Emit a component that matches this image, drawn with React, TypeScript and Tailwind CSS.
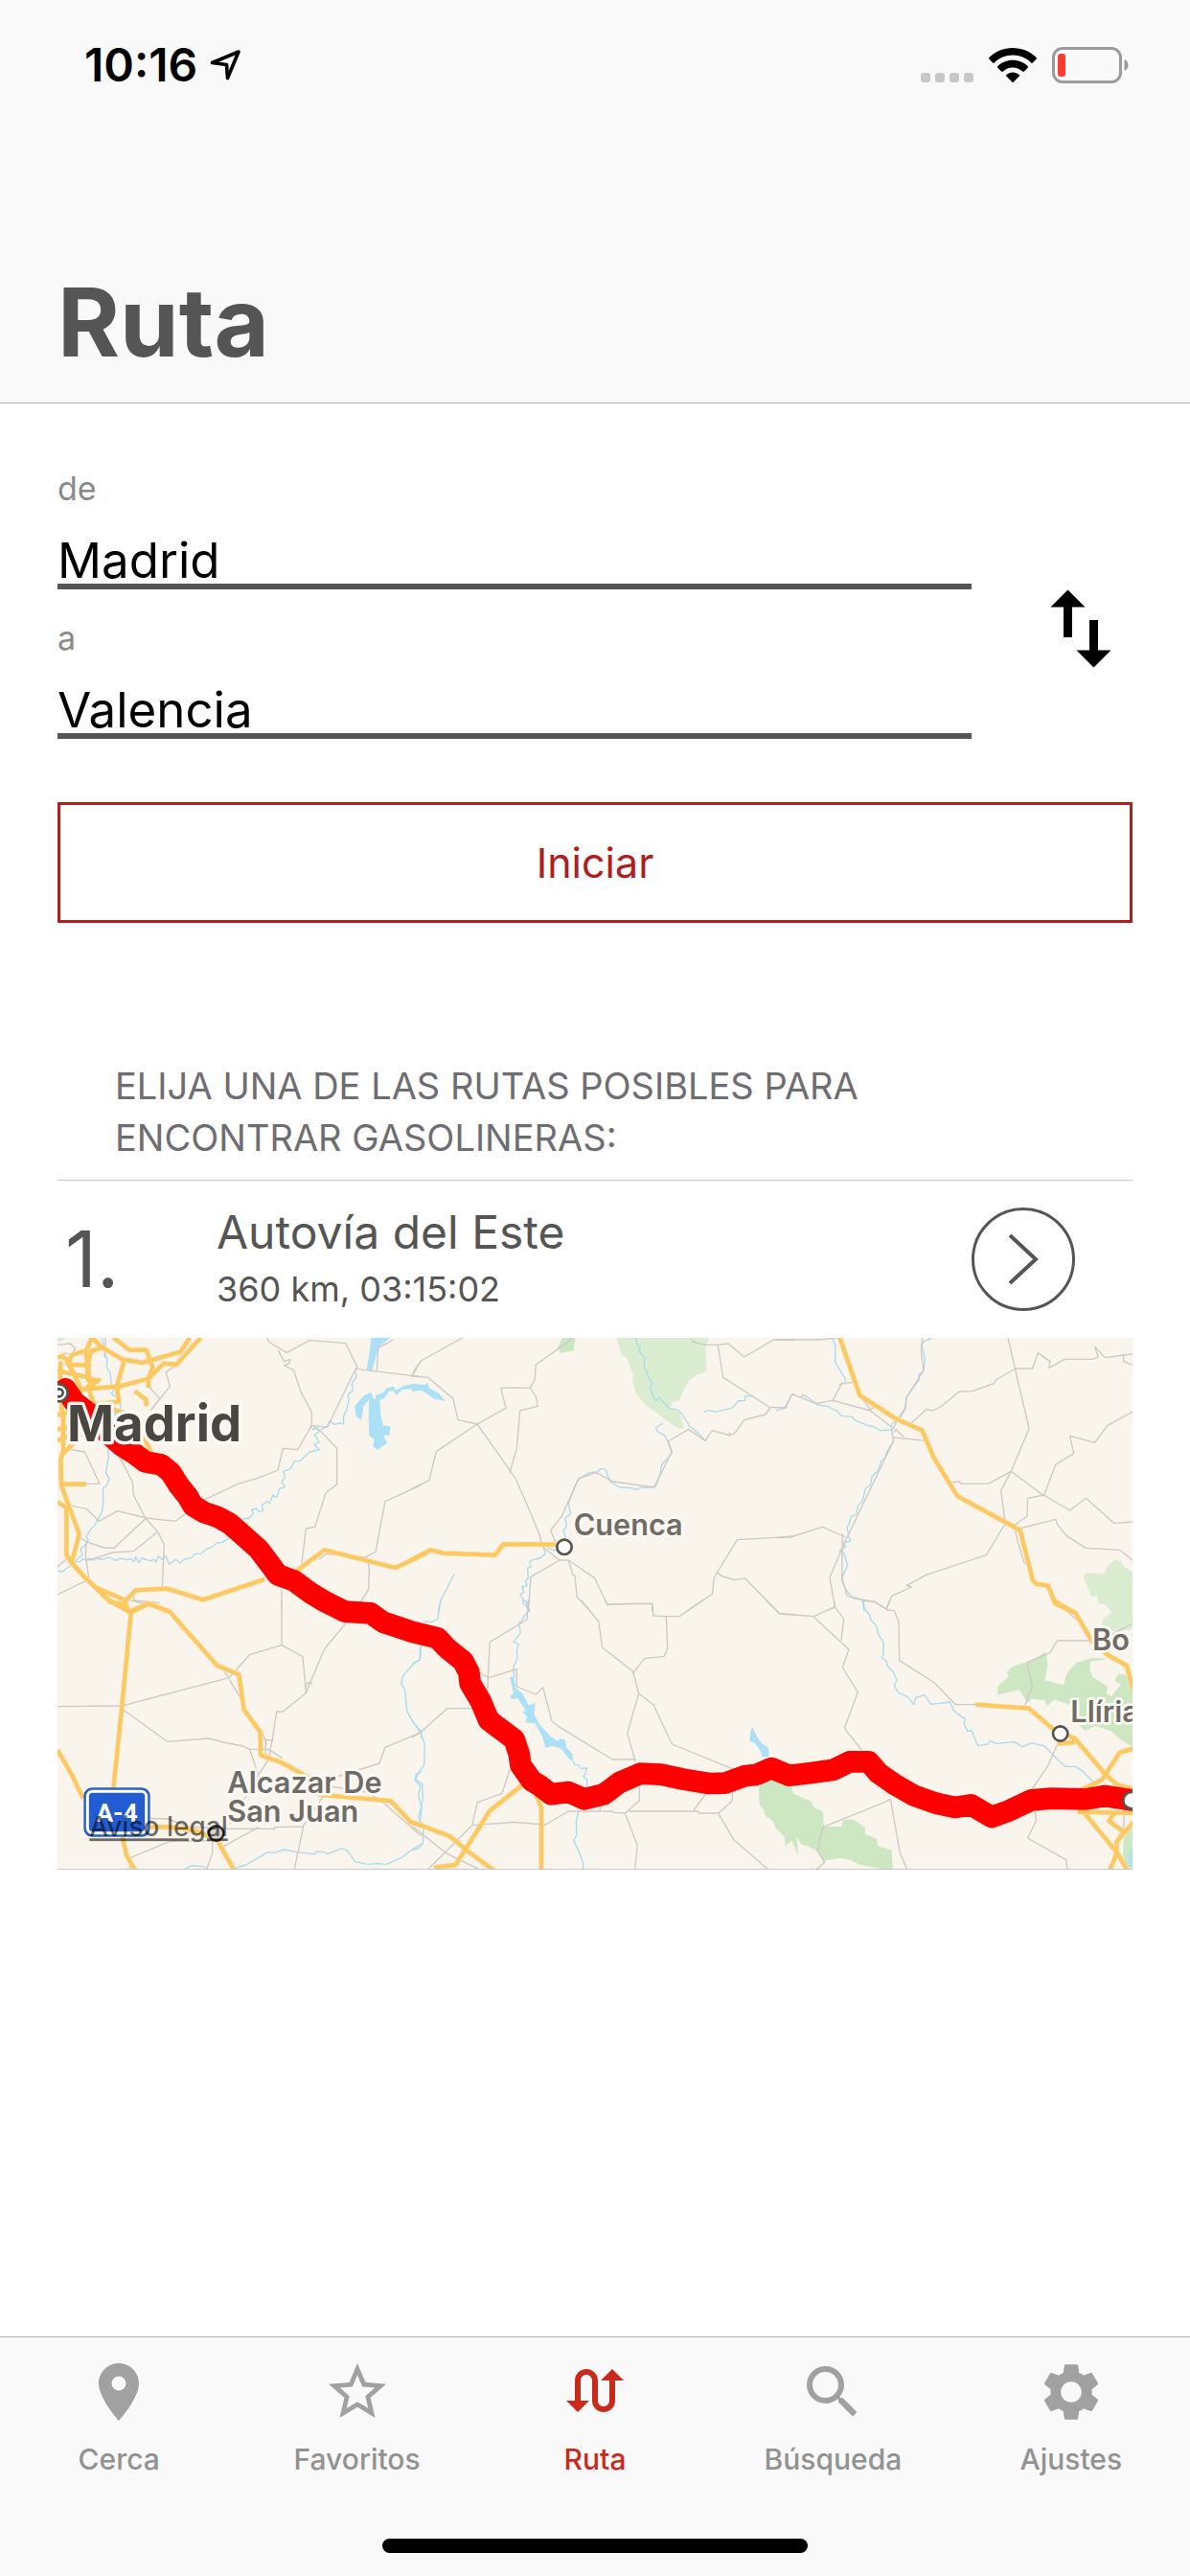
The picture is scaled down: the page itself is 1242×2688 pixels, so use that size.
import React, { useState } from "react";
import {
  MdPlace,
  MdSearch,
  MdSettings,
  MdStarOutline,
  MdSwapCalls,
  MdSwapVert,
} from "react-icons/md";

/* ---------- Map data: each tile holds point lists in its own units ---------- */

type Tile = {
  at: string;
  park?: string[];
  forest?: string[];
  lake?: string[];
  river?: string[];
  minor?: string[];
  major?: string[];
};

const tiles: Tile[] = [
  {
    at: "translate(-60 -48)",
    park: ["60,48 90,48 66,60 60,56"],
    lake: [
      "1042,48 1100,48 1085,62 1065,78 1056,110 1045,150 1028,148 1036,100",
      "1020,228 1042,218 1050,240 1068,236 1072,290 1080,322 1102,325 1100,352 1080,352 1092,378 1062,398 1048,388 1052,365 1036,355 1034,300 1036,240 1018,262 1012,305 996,295 990,262",
      "1055,228 1080,220 1090,205 1112,200 1120,212 1145,198 1175,192 1215,196 1215,210 1170,208 1140,210 1120,228 1112,214 1098,215 1082,238 1060,245",
    ],
    river: [
      "200,48 204,72 208,84 206,104 216,110 214,140 226,160 228,190 236,215 228,222 245,235 258,250 255,275 238,290 228,310",
      "218,395 220,420 216,445 212,470 222,490 214,510 202,520 204,550 200,590 188,615 176,635 162,650 150,672 158,682 144,700 132,708 138,728 120,742 116,750 132,748 138,740 150,745 160,738 172,744 186,738 200,742 220,735 245,745 255,738 275,742 290,740 300,748 305,734 315,752 325,738 350,746 362,742 368,750 376,732 388,742 398,730 410,757 430,742 445,754 455,742 480,736 490,724 510,724 525,710 545,702 560,690 575,688 600,674",
      "60,778 75,780 95,765 108,758",
      "640,616 660,612 674,598 668,586 684,582 690,592 704,588 700,572 716,560 724,566 734,540 745,548 756,520 772,515 762,500 772,484 768,466 790,458 802,434 818,434 850,405 880,398 864,382 880,375 865,352 880,340 872,330 862,336 850,322",
      "885,335 905,325 912,308 925,318 948,315 956,318 955,295 965,275 972,245 970,225 985,212 982,190 996,170 992,148",
    ],
    minor: [
      "718,48 720,60 778,94 850,56 962,65 998,138 998,146 1200,170",
      "1168,170 1180,145 1200,118",
      "1060,150 1064,80 1112,54",
      "750,86 770,122 788,115 786,128 770,134 800,150 822,218 856,280 856,322 812,398 766,394 750,462 685,488 625,505 520,555",
      "856,322 905,328 986,160 998,140",
      "862,325 884,340 935,394 935,506 900,534 866,640 838,645 824,760",
      "1200,508 1086,560 1056,718 1028,732 1036,770 1034,835 1008,878",
      "880,742 900,725 1028,735",
      "82,395 145,405 192,505 150,505",
      "252,415 295,500 298,540 335,612 374,655 394,695 388,825",
      "105,574 152,584 190,622 248,590 338,612 430,622 470,590",
      "130,674 160,690 205,705 238,706 270,675 335,615",
      "155,745 232,720 298,716 374,655",
      "150,690 148,730 158,800",
      "60,852 150,808",
      "60,765 100,730",
      "762,835 762,900",
      "60,70 100,66 116,82 104,100 84,96 60,110",
      "352,275 412,200 400,155 438,130",
      "340,195 380,238 355,272",
      "210,48 210,110",
      "270,865 295,845 300,870 380,878",
      "60,330 100,340 180,300 250,280",
    ],
    major: [
      "168,48 150,88 108,100 90,126 106,150 134,210 200,204 254,200 345,176 392,128 432,132 508,48",
      "236,48 285,86 338,86 358,140 345,176 345,204",
      "474,48 445,92 325,126 262,115 200,78 165,90 155,130 160,180 190,180 150,204",
      "168,48 200,78",
      "60,110 75,105 105,132 165,134",
      "150,88 156,180 176,200",
      "268,122 246,200 252,248 175,256 160,215",
      "302,215 338,242 338,262",
      "70,122 68,170 80,210 72,265 78,290 78,400 70,430 72,510 128,662 104,752 150,802 180,830 275,870 305,838 402,833 516,868 708,804",
      "808,778 896,712 1118,768 1215,722",
      "60,290 95,282 120,265",
      "60,335 90,328",
      "60,370 86,358 140,350",
      "60,562 88,580 88,728 104,752",
      "78,410 110,378",
      "72,506 150,506",
      "230,270 290,290 325,345 352,405",
      "60,150 100,160 150,170 188,188",
      "104,752 150,802 220,868 285,905",
      "180,830 225,875 270,882 285,905 345,880 412,905",
      "270,868 276,905",
    ],
  },
  {
    at: "translate(1110 -48)",
    park: [
      "640,48 930,48 920,75 922,152 890,165 866,182 835,245 816,248 808,268 838,282 852,332 832,332 732,258 702,222 690,180 692,165 674,112 656,102",
    ],
    forest: ["470,48 512,48 506,88 466,96 456,78"],
    lake: ["0,198 40,200 48,186 54,206 84,222 104,246 68,238 30,212 0,216"],
    river: [
      "700,48 706,70 714,76 710,90 730,112 726,135 745,180 752,188 746,205 756,236 768,244 774,234 806,270 828,272 842,282 870,325 900,350 918,370",
      "786,315 764,330 768,342 790,352 802,374 814,410 800,425 782,445 776,480 764,512 740,518 720,516 700,524 688,518 650,516 620,498 606,460 590,458 580,468 556,470 522,490 512,508 500,540 490,565 496,600 480,612 484,640 474,650 480,668 476,700",
      "914,280 930,275 950,280 1002,268 1022,246 1042,244 1044,230 1070,232",
      "410,700 418,724 400,738 380,742 368,748 372,765 362,768 364,800 356,808 360,825 344,828 350,845 338,852 350,870 348,880 362,888 368,905",
      "132,788 90,870 82,905",
      "424,704 446,714 466,710",
    ],
    minor: [
      "158,48 28,120 0,168 50,172 116,228 128,236 144,305 204,318",
      "500,52 388,132 384,180 370,204 278,205 294,268 204,318 76,404 54,494 0,520",
      "370,204 388,232 394,262 338,276 328,395 306,470",
      "204,318 306,462 326,492 358,565 400,665 406,700 462,744 490,744 572,800 612,884 676,880 752,880 752,905",
      "450,690 434,650 468,608 522,488 576,470 630,498 758,516 814,404 802,372 866,334 918,370 940,338 996,354 1012,345 1040,305 1106,288 1120,270 1118,264 974,172 958,72",
      "996,354 994,344",
      "872,48 880,60 916,70 958,70 990,66 1040,108 1132,54 1200,54",
      "1120,266 1168,266 1190,225 1200,226",
      "462,744 372,796 364,905",
      "490,744 504,790 510,792 516,858 560,905",
      "865,900 940,850 946,798 1018,680 1130,674 1200,668",
      "952,782 975,796 1012,806 1042,800 1145,905",
    ],
    major: ["0,742 58,712 98,722 260,728 286,694 450,695"],
  },
  {
    at: "translate(2250 -48)",
    park: [
      "1062,742 1080,748 1090,766 1118,782 1118,905 1050,900 1040,884 1008,880 1006,856 986,858 980,838 962,800 968,784 1026,786 1040,760",
    ],
    river: [
      "176,48 185,70 185,125 218,178 216,190 196,194",
      "488,48 464,58 456,70 466,115 462,150 446,165 448,180 426,208 408,235 406,268 390,295 362,318 360,336 325,338 305,326 286,322 262,312 245,305 238,295 204,292 192,278 160,262 130,258 100,235 84,226 78,235",
      "368,370 345,410 342,425 330,432 318,465 300,482 296,508 280,520 270,560 256,575 252,600 236,608 228,632 222,640 228,672 234,684 214,688 216,704 198,714 212,720 224,762 212,784 206,808 216,832 236,858 270,868 276,905",
      "0,276 34,266",
    ],
    minor: [
      "0,54 128,54 200,48",
      "0,266 30,266 50,224 125,254 178,244 295,276 360,326",
      "178,244 206,190 238,188",
      "262,228 300,280",
      "295,272 315,262",
      "458,48 454,90 462,150 408,235 404,268 380,305 362,340 368,370 214,690 168,798 184,890 166,900",
      "368,345 376,335 395,355 402,355",
      "368,360 470,370",
      "420,318 470,272 490,276 515,264 574,216 614,215 684,190 688,180 750,144 803,144 820,95 858,122 854,142 904,115 990,115 1008,108 998,76 1030,110 1118,98 1118,85",
      "726,48 792,332 736,466 664,505 580,505 575,498 552,500",
      "736,466 704,526 718,630 708,645 658,728 470,790 408,824 424,828 362,856 345,898",
      "736,466 838,542 876,444 932,410 920,355 998,376 1038,322 1118,278",
      "838,540 788,550 786,606 750,632 718,630",
      "838,540 920,588 970,550 1058,628 1118,624",
      "762,645 876,616 880,632 910,668 970,706 1076,712 1118,745",
      "1088,100 1088,122 1118,134",
      "748,650 758,690 776,750 800,770",
      "0,674 44,672 145,640 218,672",
      "208,660 206,800 222,855 245,864 308,874 350,900",
    ],
    major: [
      "198,44 262,228 376,302 458,338 492,420 568,544 764,650 804,808 814,818 852,824 874,880 940,910",
    ],
  },
  {
    at: "translate(-60 822)",
    river: [
      "1198,130 1196,185 1178,195 1142,236 1136,260 1148,280 1154,345 1172,380 1198,410 1200,430",
      "1200,536 1182,545 1180,565 1196,580 1190,610 1200,650 1196,690",
      "460,840 480,830 510,832 530,838",
      "610,840 650,828 718,788 740,790 770,780 810,788 866,794 872,786 896,788 905,794 950,776 966,782 992,818 1030,826 1060,824 1090,826 1136,806 1170,780 1200,762",
    ],
    minor: [
      "762,0 762,140 662,170 626,210 598,242 262,330 60,332",
      "762,140 828,176 838,290 766,348 746,348 732,440 720,500 690,545 640,630 600,700",
      "1010,0 960,75 896,152 850,260 838,290",
      "262,340 404,442 534,432 580,444 640,456 662,466 720,466 764,494",
      "662,466 688,545",
      "712,500 712,436 735,438",
      "835,275 842,258 858,260",
      "596,242 582,222",
      "598,248 636,310",
      "700,410 715,450",
      "1200,412 1086,460 1068,510 940,550",
      "900,580 1030,600 1070,625 1200,738",
      "350,682 405,684 470,708 600,715 740,715 740,710 828,708 888,620 920,580",
      "580,770 690,710",
      "830,708 802,840",
      "290,805 410,755 545,752 545,790 528,840",
      "288,808 286,840",
      "290,0 320,8 345,10",
    ],
    major: [
      "220,0 290,38 345,10 412,36 560,204 628,232 644,342 695,412 696,484 762,508 850,556 880,608 1104,628 1166,694 1210,708",
      "270,0 280,30",
      "290,38 262,330 234,600 262,735 276,798 302,842",
      "60,468 106,548 140,620",
      "330,708 420,710 490,720 560,750 612,842",
    ],
  },
  {
    at: "translate(1110 822)",
    forest: [
      "1086,590 1100,565 1130,560 1190,580 1210,800 1195,765 1190,748 1170,770 1168,740 1140,715 1130,690 1105,672 1102,655 1088,640",
    ],
    lake: [
      "306,240 318,238 326,275 345,290 365,328 386,322 382,358 402,392 438,430 458,440 464,432 480,438 484,462 502,480 504,502 494,498 468,466 440,455 418,462 408,425 385,385 355,382 360,362 346,350 356,345 330,305 312,310 308,300 318,290",
      "1066,396 1082,430 1096,448 1116,462 1118,490 1096,490 1092,472 1072,445 1058,442 1060,410",
    ],
    river: [
      "345,0 360,5 358,18 368,30 350,50 344,65 334,72 340,100 330,115 318,128 334,138 328,155 330,180 318,210 320,240",
      "504,502 510,515 522,516 530,528 548,524 544,540 536,552 548,560 548,590",
      "522,658 514,690 516,735 506,750 524,790 536,822 536,842",
      "90,0 80,58 60,68 36,66",
      "26,140 24,185 0,200",
      "0,376 26,412 40,450 38,515 24,535 10,560 32,575 34,625 20,680 36,712 34,760 22,775 0,782",
    ],
    minor: [
      "364,0 360,60 244,130 238,240 236,290",
      "200,220 240,242 328,215 328,270 388,294 410,272 438,378 458,394 628,498 700,498",
      "0,428 28,412 110,338 190,338",
      "530,0 584,66 596,148 692,222 710,292 674,416 700,505",
      "605,0 612,12 752,10 756,48 796,50 838,50 910,0",
      "796,50 800,150 790,175 728,182 690,230",
      "710,292 756,326 814,450 1010,530",
      "712,585 712,626 668,666 630,664 628,660 490,660 418,702 320,694 188,704 50,842",
      "188,704 205,632 282,604 306,530",
      "0,706 105,790 210,842",
      "668,670 706,768 698,842",
      "680,660 895,660 898,666 960,666 1002,628 1004,595",
      "880,660 920,605",
      "960,668 1008,750 1115,842",
      "585,660 595,640",
      "1108,0 1152,42 1200,44",
    ],
    major: [
      "0,694 118,738 176,786 258,846",
      "70,836 136,828 244,658 345,578",
      "388,605 405,650 405,846",
    ],
  },
  {
    at: "translate(2250 822)",
    park: ["1008,0 1118,0 1118,90 1060,98 1018,80 1026,55 1052,38 1030,10"],
    forest: [
      "0,575 40,585 56,605 110,630 120,650 146,660 150,708 205,708 210,688 240,685 280,712 278,732 314,745 318,768 362,782 365,840 330,840 262,828 232,812 200,806 150,815 130,785 96,768 80,765 65,740 58,765 44,745 30,768 26,740 0,700",
      "694,268 728,240 722,225 738,208 800,188 845,160 850,200 842,250 900,265 912,225 940,195 990,180 1040,182 985,192 982,215 992,240 1038,270 1034,290 1050,300 1080,262 1060,252 1072,230 1110,235 1118,290 1118,460 1085,440 1050,410 1000,392 968,408 950,390 930,330 870,310 850,330 840,312 800,308 788,320 760,280 694,296",
      "1118,700 1088,745 1086,800 1100,842 1118,842",
    ],
    lake: ["1118,765 1104,800 1106,830 1118,835"],
    river: [
      "274,0 276,22 292,45 296,60 314,80 320,105 336,130 336,170 330,178 345,190 350,208 366,222 378,250 370,268 382,288 412,302 432,325 438,304 465,296 485,325 515,322 545,318 556,345 580,364 592,370 588,385 600,410 612,408 632,455 662,450 670,440 690,448 745,443 772,458 800,446 840,456 866,482 905,520 938,520 960,535 992,568",
    ],
    minor: [
      "0,34 14,42 118,50 184,20 182,0",
      "118,52 228,154 208,210 256,288 214,400 268,468",
      "184,20 212,58 204,125",
      "270,0 308,4 350,30 370,32 384,68 386,188 496,258 562,326 625,326",
      "345,28 356,0",
      "1118,72 1040,112 985,126 880,126 858,164 786,194 802,270 780,328",
      "880,452 850,520 800,592",
      "812,660 814,690 788,744 908,812 912,842",
      "358,622 340,632 146,710 130,785 152,820 126,842",
      "358,622 388,790 410,842",
      "1090,670 1088,710 1065,750",
      "900,25 975,90",
    ],
    major: [
      "868,0 938,40 990,130 1040,172 1098,204 1118,280",
      "625,326 792,338 870,405 935,432 1032,545 1070,578 1118,590",
      "880,448 930,445 935,432",
      "1118,464 1076,476 1020,562 950,595",
      "944,662 1118,665",
      "944,640 1068,790 1098,842",
      "1118,694 1066,756 1066,794 1046,842",
      "1060,665 1042,690 1088,725",
    ],
  },
];

const routePoints =
  "25,160 52,200 105,242 155,297 200,337 240,362 275,388 325,397 355,422 380,462 408,497 424,525 460,547 500,560 540,582 580,617 630,662 668,712 690,742 740,760 790,797 840,827 900,857 980,862 1020,890 1070,907 1110,920 1190,940 1220,972 1270,1012 1288,1047 1292,1082 1325,1137 1350,1197 1390,1227 1430,1257 1445,1302 1450,1337 1485,1387 1510,1402 1545,1429 1600,1422 1650,1444 1710,1429 1760,1392 1825,1364 1890,1367 1960,1382 2040,1395 2090,1394 2150,1372 2190,1367 2235,1347 2290,1370 2360,1362 2430,1352 2480,1327 2540,1327 2570,1362 2620,1397 2680,1432 2750,1457 2810,1470 2860,1462 2925,1500 2980,1480 3050,1447 3110,1442 3220,1444 3280,1434 3380,1450";

type LayerName = "park" | "forest" | "lake" | "river" | "minor" | "major";

function AreaLayer({ name, fill }: { name: LayerName; fill: string }) {
  return (
    <g fill={fill}>
      {tiles.map((t) => (
        <g key={t.at} transform={t.at}>
          {(t[name] ?? []).map((p) => (
            <polygon key={p} points={p} />
          ))}
        </g>
      ))}
    </g>
  );
}

function LineLayer({ name, stroke, width }: { name: LayerName; stroke: string; width: number }) {
  return (
    <g fill="none" stroke={stroke} strokeWidth={width} strokeLinejoin="round">
      {tiles.map((t) => (
        <g key={t.at} transform={t.at}>
          {(t[name] ?? []).map((p) => (
            <polyline key={p} points={p} />
          ))}
        </g>
      ))}
    </g>
  );
}

function RouteMap() {
  return (
    <svg
      viewBox="0 0 3366 1662"
      className="block h-auto w-full bg-[#f9f4ec]"
      role="img"
      aria-label="Mapa de la ruta Madrid – Valencia"
      fontFamily="Inter, sans-serif"
    >
      <AreaLayer name="park" fill="#daedd0" />
      <AreaLayer name="forest" fill="#cde7c3" />
      <AreaLayer name="lake" fill="#abe0f7" />
      <LineLayer name="river" stroke="#a9dbee" width={4} />
      <LineLayer name="minor" stroke="#cdc9c3" width={4} />
      <LineLayer name="major" stroke="#fbdca6" width={16} />
      <LineLayer name="major" stroke="#fcc860" width={12} />
      <polyline
        points={routePoints}
        fill="none"
        stroke="#ff0000"
        strokeWidth="68"
        strokeLinejoin="round"
        strokeLinecap="round"
      />

      <g fill="#fff" stroke="#55534f">
        <circle cx="5" cy="172" r="27" strokeWidth="8" />
        <circle cx="5" cy="172" r="12" strokeWidth="8" />
        <circle cx="1587" cy="655" r="23" strokeWidth="8" />
        <circle cx="3140" cy="1239" r="23" strokeWidth="8" />
        <circle cx="3363" cy="1448" r="26" strokeWidth="8" />
        <circle cx="497" cy="1551" r="23" strokeWidth="8" fill="#d8d4cc" stroke="#33312f" />
      </g>

      <g>
        <rect x="82" y="1408" width="208" height="154" rx="26" fill="#2b62c4" />
        <rect x="94" y="1420" width="184" height="130" rx="16" fill="#235cd2" stroke="#fff" strokeWidth="9" />
        <text
          x="186"
          y="1514"
          textAnchor="middle"
          fontSize="80"
          fontWeight="700"
          fill="#fff"
          fontFamily="Roboto, sans-serif"
        >
          A-4
        </text>
      </g>

      <g stroke="#fdfaf5" strokeLinejoin="round" paintOrder="stroke">
        <text x="30" y="325" fontSize="158" fontWeight="700" fill="#4a4742" strokeWidth="20">
          Madrid
        </text>
        <g fontSize="92" fontWeight="600" fill="#6f6c68" strokeWidth="16">
          <text x="1616" y="619">Cuenca</text>
          <text x="3240" y="978">Bo</text>
          <text x="3172" y="1203">Llíria</text>
          <text x="532" y="1424">Alcazar De</text>
          <text x="532" y="1516">San Juan</text>
        </g>
      </g>
      <a href="#aviso-legal">
        <text
          x="100"
          y="1561"
          fontSize="84"
          fontWeight="500"
          fill="#000"
          fillOpacity="0.56"
          textDecoration="underline"
        >
          Aviso legal
        </text>
      </a>
    </svg>
  );
}

/* ---------- Status bar ---------- */

function StatusBar() {
  return (
    <div className="flex h-34 items-center justify-between pr-16 pl-22">
      <div className="flex items-center gap-3">
        <span className="text-[48px] leading-14 font-semibold text-black">10:16</span>
        <svg width="34" height="34" viewBox="0 0 34 34" fill="none" aria-hidden="true">
          <path
            d="M31 3 L19.5 30.5 L18.5 16.5 L3.5 14.5 Z"
            stroke="#000"
            strokeWidth="3.6"
            strokeLinejoin="round"
          />
        </svg>
      </div>
      <div className="flex items-center gap-4">
        <div className="flex h-9 items-end gap-[5px]">
          {[0, 1, 2, 3].map((i) => (
            <span key={i} className="size-[10px] rounded-[3px] bg-[#c7c7c7]" />
          ))}
        </div>
        <svg width="50" height="36" viewBox="0 0 50 36" aria-hidden="true">
          <path d="M25 0C15.600 0 6.800 3.700 .4 9.900a1.200 1.200 0 0 0 0 1.700l3.700 3.800a1.200 1.200 0 0 0 1.700 0C10.900 10.500 17.700 7.600 25 7.600s14.100 2.900 19.200 7.800a1.200 1.200 0 0 0 1.700 0l3.700-3.800a1.200 1.200 0 0 0 0-1.700C43.200 3.700 34.400 0 25 0Z" />
          <path d="M25 12.800c-6 0-11.500 2.300-15.600 6.200a1.200 1.200 0 0 0 0 1.700l3.700 3.800a1.200 1.200 0 0 0 1.700 0c2.700-2.500 6.300-4.100 10.200-4.100s7.500 1.600 10.200 4.100a1.200 1.200 0 0 0 1.700 0l3.700-3.800a1.200 1.200 0 0 0 0-1.700C36.500 15.100 31 12.800 25 12.800Z" />
          <path d="M25 25.500c-2.600 0-4.900 .9-6.600 2.400a1 1 0 0 0 0 1.500l5.800 6.100a1.200 1.200 0 0 0 1.700 0l5.800-6.100a1 1 0 0 0 0-1.500c-1.700-1.500-4.100-2.400-6.700-2.400Z" />
        </svg>
        <svg width="80" height="38" viewBox="0 0 80 38" aria-hidden="true">
          <rect x="1.500" y="1.500" width="70" height="35" rx="9.500" fill="none" stroke="#9b9b9b" strokeWidth="3" />
          <rect x="6" y="7" width="8" height="24" rx="3" fill="#ff3b30" />
          <path d="M75.500 13c2.600 1 4 3.300 4 6s-1.400 5-4 6Z" fill="#9b9b9b" />
        </svg>
      </div>
    </div>
  );
}

/* ---------- Form ---------- */

function PlaceField({
  id,
  label,
  value,
  onChange,
}: {
  id: string;
  label: string;
  value: string;
  onChange: (v: string) => void;
}) {
  return (
    <div className="flex flex-col">
      <label htmlFor={id} className="text-[34px] leading-11 text-[#8a8a8a]">
        {label}
      </label>
      <input
        id={id}
        value={value}
        onChange={(e) => onChange(e.target.value)}
        className="mt-[27px] h-14 w-full border-b-6 border-[#555] bg-transparent p-0 text-[51px] leading-[50px] text-black outline-none"
      />
    </div>
  );
}

const tabs = [
  { label: "Cerca", Icon: MdPlace },
  { label: "Favoritos", Icon: MdStarOutline },
  { label: "Ruta", Icon: MdSwapCalls, active: true },
  { label: "Búsqueda", Icon: MdSearch },
  { label: "Ajustes", Icon: MdSettings },
];

export default function App() {
  const [from, setFrom] = useState("Madrid");
  const [to, setTo] = useState("Valencia");

  return (
    <div className="flex min-h-screen flex-col bg-white font-['Inter',sans-serif]">
      <header className="border-b border-[#b2b2b2] bg-[#f9f9f9] pb-6">
        <StatusBar />
        <h1 className="mt-35 px-15 text-[99px] leading-[120px] font-bold text-[#555]">Ruta</h1>
      </header>

      <main className="flex grow flex-col px-15 pt-[67px]">
        <form onSubmit={(e) => e.preventDefault()}>
          <div className="flex items-center justify-between">
            <div className="flex w-[85%] flex-col gap-[29px]">
              <PlaceField id="from" label="de" value={from} onChange={setFrom} />
              <PlaceField id="to" label="a" value={to} onChange={setTo} />
            </div>
            <button
              type="button"
              aria-label="Intercambiar"
              className="mt-13"
              onClick={() => {
                setFrom(to);
                setTo(from);
              }}
            >
              <MdSwapVert className="size-27 text-black" />
            </button>
          </div>
          <button
            type="submit"
            className="mt-[66px] h-[126px] w-full border-3 border-[#b01e1e] text-[43px] leading-14 text-[#b01e1e]"
          >
            Iniciar
          </button>
        </form>

        <section className="mt-[143px]">
          <h2 className="border-b border-[#c8c7cc] px-15 pb-[17px] text-[38px] leading-[54px] text-[#6d6d72] uppercase">
            Elija una de las rutas posibles para encontrar gasolineras:
          </h2>
          <article className="border-b border-[#c8c7cc]">
            <div className="flex h-41 items-center pr-15 text-[#555]">
              <span className="w-[166px] pl-2 text-[81px] leading-24">1.</span>
              <div className="grow">
                <h3 className="text-[48px] leading-[62px]">Autovía del Este</h3>
                <p className="text-[36px] leading-14">360 km, 03:15:02</p>
              </div>
              <button
                type="button"
                aria-label="Ver ruta"
                className="flex size-27 items-center justify-center rounded-full border-3 border-[#555]"
              >
                <svg width="32" height="54" viewBox="0 0 32 54" fill="none" aria-hidden="true">
                  <path d="M2 2 29 27 2 52" stroke="#555" strokeWidth="4" />
                </svg>
              </button>
            </div>
            <RouteMap />
          </article>
        </section>
      </main>

      <footer className="border-t border-[#b2b2b2] bg-[#f9f9f9] pt-[21px] pb-6">
        <nav className="grid grid-cols-5">
          {tabs.map(({ label, Icon, active }) => (
            <a
              key={label}
              href={"#" + label.toLowerCase()}
              aria-current={active ? "page" : undefined}
              className={
                active
                  ? "flex flex-col items-center gap-4 text-[#c92a1a]"
                  : "flex flex-col items-center gap-4 text-[#929292]"
              }
            >
              <Icon className={active ? "size-18" : "size-18 text-[#a1a1a1]"} />
              <span className="text-[30px] leading-9 font-medium">{label}</span>
            </a>
          ))}
        </nav>
        <div className="mx-auto mt-[65px] h-[15px] w-[444px] rounded-full bg-black" />
      </footer>
    </div>
  );
}
